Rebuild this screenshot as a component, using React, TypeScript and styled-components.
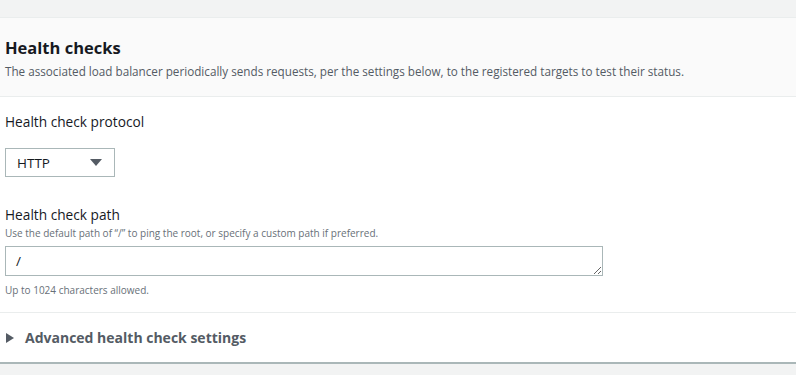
import styled, { createGlobalStyle } from "styled-components";

const GlobalStyle = createGlobalStyle`
  html, body {
    margin: 0;
    padding: 0;
    background: #f2f3f3;
    font-family: "Open Sans", "Noto Sans", sans-serif;
    color: #16191f;
  }
`;

const Page = styled.div`
  width: 796px;
  height: 375px;
  overflow: hidden;
  padding-top: 17px;
  box-sizing: border-box;
`;

const Panel = styled.section`
  background: #ffffff;
  border-top: 1px solid #eaeded;
  border-bottom: 2px solid #aab7b8;
`;

const PanelHeader = styled.header`
  background: #fafafa;
  border-bottom: 1px solid #eaeded;
  padding: 17px 5px 17px;
`;

const Title = styled.h2`
  margin: 0;
  font-size: 16.5px;
  line-height: 26px;
  font-weight: 700;
  color: #16191f;
`;

const Description = styled.p`
  margin: 2px 0 0;
  font-size: 11.7px;
  line-height: 16px;
  color: #545b64;
`;

const PanelBody = styled.div`
  padding: 15px 5px 14px;
  display: flex;
  flex-direction: column;
  gap: 22px;
  border-bottom: 1px solid #eaeded;
`;

const Field = styled.div`
  display: flex;
  flex-direction: column;
`;

const Label = styled.label`
  font-size: 13.7px;
  line-height: 20px;
  color: #16191f;
`;

const Hint = styled.span`
  font-size: 10px;
  line-height: 16px;
  color: #687078;
`;

const Control = styled.div<{ $top: number }>`
  margin-top: ${(p) => p.$top}px;
  margin-bottom: 6px;
`;

const Select = styled.div`
  width: 110px;
  height: 29px;
  box-sizing: border-box;
  border: 1px solid #aab7b8;
  background: #fff;
  display: flex;
  align-items: center;
  justify-content: space-between;
  padding: 0 12px 0 11px;
  font-size: 13.5px;
  color: #16191f;
`;

const Caret = styled.span`
  width: 0;
  height: 0;
  border-left: 6px solid transparent;
  border-right: 6px solid transparent;
  border-top: 7px solid #545b64;
`;

const TextArea = styled.textarea`
  display: block;
  width: 598px;
  height: 30px;
  box-sizing: border-box;
  border: 1px solid #aab7b8;
  border-radius: 0;
  padding: 5px 10px;
  font-family: "Open Sans", "Noto Sans", sans-serif;
  font-size: 13.5px;
  line-height: 18px;
  color: #16191f;
  resize: both;
  outline: none;
`;

const Expander = styled.button`
  display: flex;
  align-items: center;
  gap: 11px;
  width: 100%;
  height: 49px;
  padding: 0 6px;
  background: #fff;
  border: none;
  font-family: "Open Sans", "Noto Sans", sans-serif;
  font-size: 14px;
  font-weight: 700;
  color: #545b64;
  cursor: pointer;
`;

const RightTriangle = styled.span`
  width: 0;
  height: 0;
  border-top: 5px solid transparent;
  border-bottom: 5px solid transparent;
  border-left: 8px solid #545b64;
`;

export default function App() {
  return (
    <>
      <GlobalStyle />
      <Page>
        <Panel>
          <PanelHeader>
            <Title>Health checks</Title>
            <Description>
              The associated load balancer periodically sends requests, per the
              settings below, to the registered targets to test their status.
            </Description>
          </PanelHeader>
          <PanelBody>
            <Field>
              <Label>Health check protocol</Label>
              <Control $top={16}>
                <Select>
                  HTTP
                  <Caret />
                </Select>
              </Control>
            </Field>
            <Field>
              <Label>Health check path</Label>
              <Hint>
                Use the default path of “/” to ping the root, or specify a
                custom path if preferred.
              </Hint>
              <Control $top={5}>
                <TextArea defaultValue="/" />
              </Control>
              <Hint>Up to 1024 characters allowed.</Hint>
            </Field>
          </PanelBody>
          <Expander>
            <RightTriangle />
            Advanced health check settings
          </Expander>
        </Panel>
      </Page>
    </>
  );
}
